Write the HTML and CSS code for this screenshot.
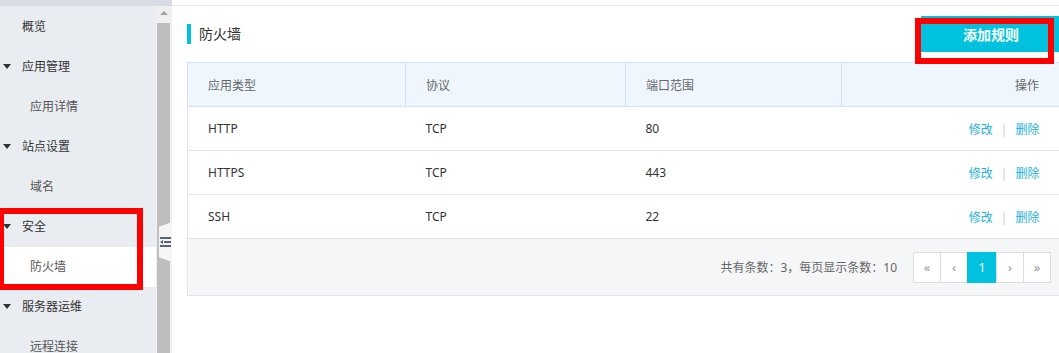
FILE: index.html
```html
<!DOCTYPE html>
<html lang="zh-CN">
<head>
    <meta charset="UTF-8">
    <title>防火墙</title>
    <link rel="stylesheet" href="styles.css">
</head>
<body>
    <div class="sidebar">
        <div class="sidebar_top"></div>
        <div class="sidebar_body">
            <ul class="nav">
                <li class="nav_item">概览</li>
                <li class="nav_item nav_group"><span class="caret"></span>应用管理</li>
                <li class="nav_item nav_sub">应用详情</li>
                <li class="nav_item nav_group"><span class="caret"></span>站点设置</li>
                <li class="nav_item nav_sub">域名</li>
                <li class="nav_item nav_group"><span class="caret"></span>安全</li>
                <li class="nav_item nav_sub active">防火墙</li>
                <li class="nav_item nav_group"><span class="caret"></span>服务器运维</li>
                <li class="nav_item nav_sub">远程连接</li>
            </ul>
            <div class="scrollbar">
                <div class="scroll_arrow"></div>
                <div class="scroll_thumb"></div>
            </div>
        </div>
        <div class="collapse_handle">
            <svg width="11" height="12" viewBox="0 0 11 12">
                <rect x="0" y="1" width="11" height="2" fill="#5a6372"/>
                <rect x="4" y="5" width="7" height="2" fill="#5a6372"/>
                <path d="M0 6 L3 4 L3 8 Z" fill="#5a6372"/>
                <rect x="0" y="9" width="11" height="2" fill="#5a6372"/>
            </svg>
        </div>
        <div class="mark mark_nav"></div>
    </div>

    <div class="main">
        <div class="content">
            <div class="title_row">
                <h2 class="title">防火墙</h2>
                <button class="btn_add" type="button">添加规则</button>
            </div>

            <table class="rules">
                <thead>
                    <tr>
                        <th class="col1">应用类型</th>
                        <th class="col2">协议</th>
                        <th class="col3">端口范围</th>
                        <th class="col4 right">操作</th>
                    </tr>
                </thead>
                <tbody>
                    <tr>
                        <td>HTTP</td>
                        <td>TCP</td>
                        <td>80</td>
                        <td class="right"><a class="link">修改</a><span class="sep">|</span><a class="link">删除</a></td>
                    </tr>
                    <tr>
                        <td>HTTPS</td>
                        <td>TCP</td>
                        <td>443</td>
                        <td class="right"><a class="link">修改</a><span class="sep">|</span><a class="link">删除</a></td>
                    </tr>
                    <tr>
                        <td>SSH</td>
                        <td>TCP</td>
                        <td>22</td>
                        <td class="right"><a class="link">修改</a><span class="sep">|</span><a class="link">删除</a></td>
                    </tr>
                </tbody>
            </table>

            <div class="table_footer">
                <span class="total">共有条数：3，每页显示条数：10</span>
                <ul class="pager">
                    <li>«</li>
                    <li>‹</li>
                    <li class="current">1</li>
                    <li>›</li>
                    <li>»</li>
                </ul>
            </div>
        </div>
        <div class="mark mark_btn"></div>
    </div>
</body>
</html>
```

FILE: styles.css
```css
* {
    margin: 0;
    padding: 0;
    box-sizing: border-box;
}

body {
    display: flex;
    height: 353px;
    overflow: hidden;
    background-color: #fff;
    font-family: "Noto Sans", "Noto Sans CJK SC", sans-serif;
    font-size: 12px;
    color: #333;
}

/* sidebar */
.sidebar {
    position: relative;
    width: 172px;
    flex-shrink: 0;
    display: flex;
    flex-direction: column;
    background-color: #e9edf2;
}

.sidebar_top {
    height: 6px;
    flex-shrink: 0;
    background-color: #d8dde5;
}

.sidebar_body {
    flex: 1;
    min-height: 0;
    overflow: hidden;
    display: flex;
}

.nav {
    list-style: none;
    width: 156px;
    padding-top: 1px;
}

.nav_item {
    height: 40px;
    line-height: 40px;
    padding-left: 22px;
    position: relative;
    color: #333;
}

.nav_sub {
    padding-left: 30px;
    color: #555;
}

.nav_item.active {
    background-color: #fff;
}

.caret {
    position: absolute;
    left: 3px;
    top: 17px;
    width: 0;
    height: 0;
    border-left: 4px solid transparent;
    border-right: 4px solid transparent;
    border-top: 5px solid #333;
}

.scrollbar {
    width: 16px;
    background-color: #f0f0f0;
    display: flex;
    flex-direction: column;
    align-items: flex-start;
}

.scroll_arrow {
    margin: 5px 0 0 4px;
    width: 0;
    height: 0;
    border-left: 4px solid transparent;
    border-right: 4px solid transparent;
    border-bottom: 4px solid #a3a3a3;
}

.scroll_thumb {
    margin: 8px 0 0 1px;
    width: 13px;
    flex: 1;
    background-color: #bebebe;
}

.collapse_handle {
    position: absolute;
    left: 159px;
    top: 222px;
    width: 13px;
    height: 40px;
    background-color: #f5f5f5;
    clip-path: polygon(0 12%, 100% 0, 100% 100%, 0 88%);
    display: flex;
    align-items: center;
    justify-content: flex-end;
    padding-right: 1px;
}

/* red annotation boxes */
.mark {
    position: absolute;
    border: 6px solid #ff0000;
    pointer-events: none;
}

.mark_nav {
    left: -2px;
    top: 208px;
    width: 145px;
    height: 82px;
}

.mark_btn {
    left: 743px;
    top: 18px;
    width: 139px;
    height: 46px;
}

/* main */
.main {
    position: relative;
    flex: 1;
    padding-top: 5px;
}

.content {
    border-top: 1px solid #e8e8e8;
    padding: 10px 0 0 15px;
}

.title_row {
    display: flex;
    justify-content: space-between;
    align-items: center;
    height: 36px;
    margin-bottom: 10px;
}

.title {
    font-size: 14px;
    font-weight: normal;
    color: #333;
    border-left: 4px solid #00c1de;
    padding-left: 8px;
    line-height: 20px;
    margin-top: 0;
}

.btn_add {
    width: 140px;
    height: 36px;
    margin-right: -1px;
    border: none;
    background-color: #00c1de;
    color: #fff;
    font-family: inherit;
    font-size: 14px;
    font-weight: bold;
}

.rules {
    width: 872px;
    border-collapse: collapse;
    table-layout: fixed;
}

.rules th {
    height: 44px;
    background-color: #eff6fe;
    border: 1px solid #cfe2f7;
    color: #666;
    font-weight: normal;
    text-align: left;
    padding: 0 20px;
}

.col1 { width: 218px; }
.col2 { width: 220px; }
.col3 { width: 216px; }
.col4 { width: 218px; }

.rules td {
    height: 44px;
    border-bottom: 1px solid #e1e6eb;
    padding: 0 20px;
    color: #333;
}

.rules td:first-child {
    border-left: 1px solid #e1e6eb;
}

.rules .right {
    text-align: right;
}

.link {
    color: #1fb0d9;
    cursor: pointer;
}

.sep {
    color: #d0d0d0;
    margin: 0 8px;
}

.table_footer {
    display: flex;
    justify-content: flex-end;
    align-items: center;
    height: 57px;
    background-color: #f5f6f8;
    border-left: 1px solid #e1e6eb;
    border-bottom: 1px solid #e1e6eb;
    padding-right: 9px;
}

.total {
    color: #666;
    margin-right: 17px;
}

.pager {
    list-style: none;
    display: flex;
}

.pager li {
    width: 28px;
    height: 31px;
    line-height: 29px;
    text-align: center;
    border: 1px solid #ddd;
    margin-left: -1px;
    background-color: #fff;
    color: #999;
    font-size: 13px;
}

.pager li.current {
    background-color: #00c1de;
    border-color: #00c1de;
    color: #fff;
    width: 30px;
}
```
